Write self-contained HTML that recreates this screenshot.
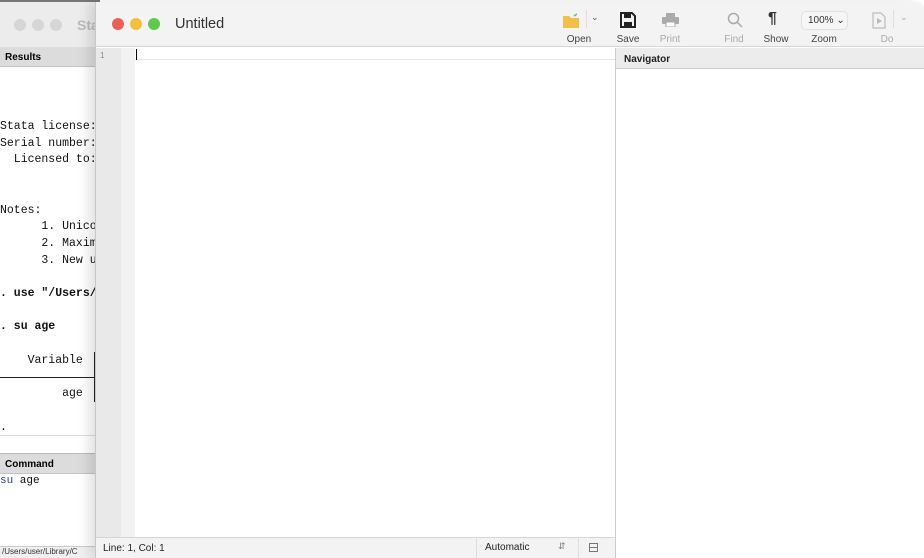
<!DOCTYPE html>
<html><head><style>
*{margin:0;padding:0;box-sizing:border-box}
body{width:924px;height:558px;overflow:hidden;background:#fff;position:relative;font-family:"Liberation Sans",sans-serif}
.bg{position:absolute;left:0;top:0;width:100px;height:558px;background:#fff}
.bgtitle{position:absolute;left:0;top:0;width:100px;height:47px;background:#ececec;border-top:2px solid #777}
.dot{position:absolute;width:12px;height:12px;border-radius:50%}
.mono{font-family:"Liberation Mono",monospace;font-size:11.5px;position:absolute;left:0;white-space:pre;color:#111;line-height:16.7px}
.front{position:absolute;left:95px;top:2px;width:829px;height:556px;background:#fff;border-left:1px solid #c8c8c8;box-shadow:-6px 0 12px rgba(0,0,0,.12);border-top-right-radius:10px}
.tb{position:absolute;left:0;top:0;width:829px;height:45px;background:#f3f3f3;border-bottom:1px solid #d6d6d6;border-top-right-radius:10px}
.lbl{position:absolute;top:32px;font-size:10px;color:#444;text-align:center;width:40px}
.dim{color:#aaa}
</style></head><body>
<div class="bg">
 <div class="bgtitle">
  <div class="dot" style="left:14px;top:17px;background:#d6d6d6"></div>
  <div class="dot" style="left:32px;top:17px;background:#d6d6d6"></div>
  <div class="dot" style="left:50px;top:17px;background:#d6d6d6"></div>
  <div style="position:absolute;left:77px;top:15px;font-size:14px;color:#bbb;font-weight:bold">Sta</div>
 </div>
 <div style="position:absolute;left:0;top:47px;width:100px;height:20px;background:#dcdcdc;border-bottom:1px solid #c4c4c4;font-size:10px;font-weight:bold;padding:5px 0 0 5px">Results</div>
 <div class="mono" style="top:119px">Stata license:
Serial number:
  Licensed to:


Notes:
      1. Unico
      2. Maxim
      3. New u

<b>. use "/Users/</b>

<b>. su age</b>

    Variable

         age

.</div>
 <div style="position:absolute;left:0;top:377px;width:95px;border-top:1px solid #222"></div>
 <div style="position:absolute;left:94px;top:352px;height:50px;border-left:1px solid #222"></div>
 <div style="position:absolute;left:0;top:435px;width:100px;border-top:1px solid #ddd"></div>
 <div style="position:absolute;left:0;top:453px;width:100px;height:21px;background:#dcdcdc;border-top:1px solid #bbb;border-bottom:1px solid #c4c4c4;font-size:10px;font-weight:bold;padding:5px 0 0 5px">Command</div>
 <div class="mono" style="top:473px;font-size:11px"><span style="color:#2a3fa8">su</span> age</div>
 <div style="position:absolute;left:0;top:546px;width:100px;height:12px;background:#f0f0f0;border-top:1px solid #ccc;font-size:8px;color:#333;padding-left:2px;white-space:nowrap;overflow:hidden">/Users/user/Library/C</div>
</div>

<div class="front">
 <div class="tb">
  <div class="dot" style="left:16px;top:16px;background:#ec5f57"></div>
  <div class="dot" style="left:34px;top:16px;background:#f1bf42"></div>
  <div class="dot" style="left:52px;top:16px;background:#5fc94c"></div>
  <div style="position:absolute;left:79px;top:14px;font-size:14.5px;color:#333">Untitled</div>
  <svg style="position:absolute;left:466px;top:11px" width="18" height="16"><path d="M1 3h6l2 2h8v10H1z" fill="#f0c04a"/><path d="M12 3l3-2" stroke="#5c5" stroke-width="1.5"/></svg>
  <div style="position:absolute;left:490px;top:8px;height:18px;border-left:1px solid #ddd"></div>
  <div style="position:absolute;left:495px;top:10px;font-size:9px;color:#555">&#8964;</div>
  <div class="lbl" style="left:463px">Open</div>
  <svg style="position:absolute;left:524px;top:10px" width="16" height="16"><path d="M1 1h11l3 3v11H1z" fill="none" stroke="#222" stroke-width="2"/><rect x="4" y="2" width="7" height="4" fill="#222"/><rect x="4" y="10" width="8" height="4" fill="#222"/></svg>
  <div class="lbl" style="left:512px">Save</div>
  <svg style="position:absolute;left:566px;top:11px" width="17" height="14"><rect x="4" y="0" width="9" height="4" fill="#aaa"/><rect x="0" y="4" width="17" height="7" rx="1" fill="#aaa"/><rect x="4" y="9" width="9" height="5" fill="#fff" stroke="#aaa"/></svg>
  <div class="lbl dim" style="left:554px">Print</div>
  <svg style="position:absolute;left:631px;top:10px" width="16" height="16"><circle cx="6.5" cy="6.5" r="5" fill="none" stroke="#aaa" stroke-width="1.5"/><path d="M10 10l5 5" stroke="#aaa" stroke-width="1.5"/></svg>
  <div class="lbl dim" style="left:618px">Find</div>
  <div style="position:absolute;left:672px;top:8px;font-size:16px;font-weight:bold;color:#333">¶</div>
  <div class="lbl" style="left:660px">Show</div>
  <div style="position:absolute;left:705px;top:9px;width:47px;height:19px;border:1px solid #e0e0e0;border-radius:5px;background:#f6f6f6;font-size:10px;color:#333;padding:3px 0 0 6px">100% &#8964;</div>
  <div class="lbl" style="left:708px">Zoom</div>
  <svg style="position:absolute;left:776px;top:10px" width="14" height="17"><path d="M1 1h8l4 4v11H1z" fill="none" stroke="#bbb" stroke-width="1.2"/><path d="M5 6l5 3-5 3z" fill="#bbb"/></svg>
  <div style="position:absolute;left:797px;top:8px;height:18px;border-left:1px solid #ddd"></div>
  <div style="position:absolute;left:804px;top:10px;font-size:9px;color:#aaa">&#8964;</div>
  <div class="lbl dim" style="left:771px">Do</div>
 </div>
 <div style="position:absolute;left:0;top:46px;width:25px;height:489px;background:#e9e9e9"></div>
 <div style="position:absolute;left:25px;top:46px;width:14px;height:489px;background:#f2f2f2"></div>
 <div style="position:absolute;left:4px;top:49px;font-size:8px;color:#888">1</div>
 <div style="position:absolute;left:39px;top:46px;width:480px;height:12px;border-bottom:1px solid #e6e6e6"></div>
 <div style="position:absolute;left:40px;top:47px;height:11px;border-left:1px solid #000"></div>
 <div style="position:absolute;left:519px;top:46px;height:510px;border-left:1px solid #ccc"></div>
 <div style="position:absolute;left:520px;top:46px;width:309px;height:21px;background:#ececec;border-bottom:1px solid #ccc;font-size:10px;font-weight:bold;color:#222;padding:6px 0 0 8px">Navigator</div>
 <div style="position:absolute;left:0;top:535px;width:519px;height:21px;background:#f3f3f3;border-top:1px solid #d6d6d6;font-size:10px;color:#222;padding:5px 0 0 7px">Line: 1, Col: 1</div>
 <div style="position:absolute;left:380px;top:536px;height:20px;border-left:1px solid #ddd"></div>
 <div style="position:absolute;left:389px;top:540px;font-size:10px;color:#222">Automatic</div>
 <div style="position:absolute;left:462px;top:539px;font-size:9px;color:#777">&#8693;</div>
 <div style="position:absolute;left:482px;top:536px;height:20px;border-left:1px solid #ddd"></div>
 <div style="position:absolute;left:493px;top:541px;width:9px;height:9px;border:1px solid #777"><div style="margin-top:3px;border-top:1px solid #777"></div></div>
</div>
</body></html>
